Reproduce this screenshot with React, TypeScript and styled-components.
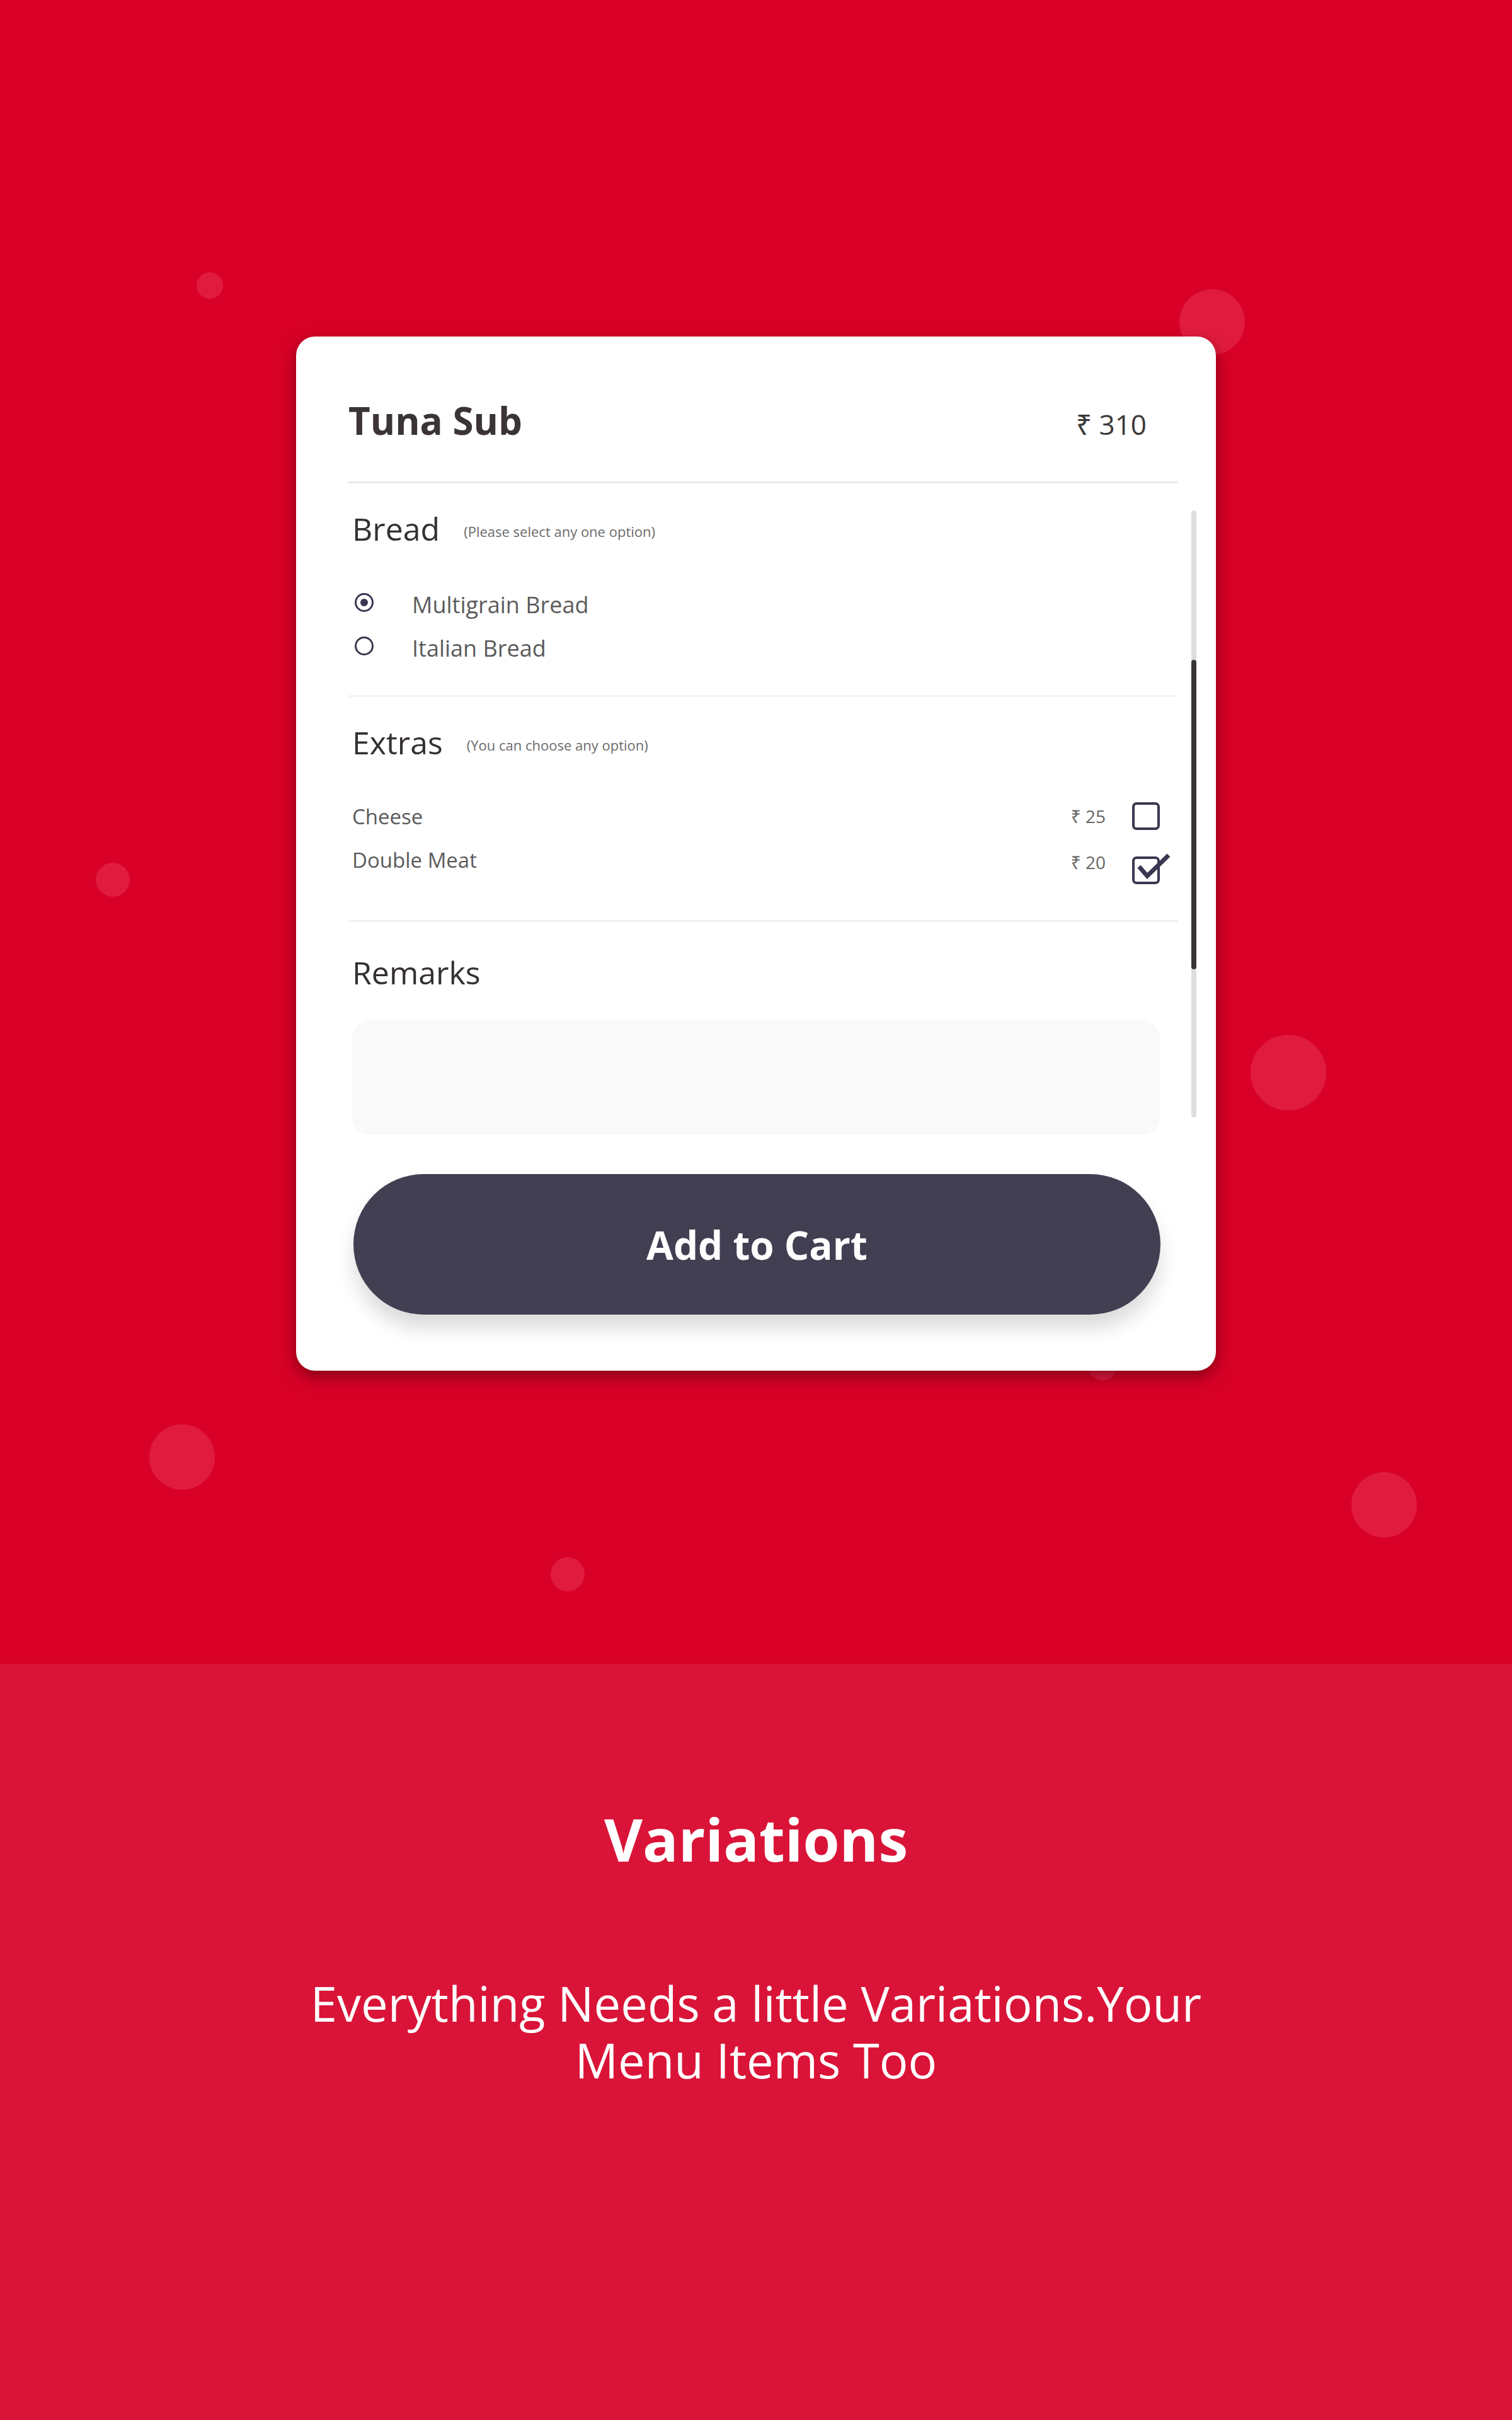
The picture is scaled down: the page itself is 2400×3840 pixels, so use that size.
import React from "react"
import styled, { createGlobalStyle } from "styled-components"

const GlobalStyle = createGlobalStyle`
    * {
        box-sizing: border-box;
    }

    body {
        margin: 0;
        font-family: "Open Sans", "Noto Sans", "DejaVu Sans", sans-serif;
    }
`

const bubbles = [
    { x: 333, y: 453, r: 21 },
    { x: 1924, y: 511, r: 52 },
    { x: 179, y: 1396, r: 27 },
    { x: 2045, y: 1702, r: 60 },
    { x: 1750, y: 2165, r: 25 },
    { x: 289, y: 2312, r: 52 },
    { x: 2197, y: 2388, r: 52 },
    { x: 901, y: 2498, r: 27 }
]

const breads = [
    { label: "Multigrain Bread", selected: true },
    { label: "Italian Bread", selected: false }
]

const extras = [
    { label: "Cheese", price: 25, checked: false },
    { label: "Double Meat", price: 20, checked: true }
]

const App = () => {
    return (
        <Page>
            <GlobalStyle />
            <Hero>
                {bubbles.map((b, i) => (
                    <Bubble key={i} $x={b.x} $y={b.y} $r={b.r} />
                ))}
                <Card>
                    <Header>
                        <Title>Tuna Sub</Title>
                        <Price>₹ 310</Price>
                    </Header>

                    <Body>
                        <Content>
                            <Section $pt={41} $pb={50}>
                                <SectionHead>
                                    <SectionTitle>Bread</SectionTitle>
                                    <Note>(Please select any one option)</Note>
                                </SectionHead>
                                <OptionList $mt={64}>
                                    {breads.map(b => (
                                        <RadioRow key={b.label}>
                                            <Radio>{b.selected && <Dot />}</Radio>
                                            {b.label}
                                        </RadioRow>
                                    ))}
                                </OptionList>
                            </Section>

                            <Section $pt={41} $pb={71}>
                                <SectionHead>
                                    <SectionTitle>Extras</SectionTitle>
                                    <Note>(You can choose any option)</Note>
                                </SectionHead>
                                <OptionList $mt={61}>
                                    {extras.map(e => (
                                        <ExtraRow key={e.label}>
                                            <ExtraName>{e.label}</ExtraName>
                                            <ExtraPrice $drop={e.checked ? 8 : 0}>
                                                ₹ {e.price}
                                            </ExtraPrice>
                                            <Checkbox $drop={e.checked ? 34 : 0}>
                                                {e.checked && (
                                                    <Tick viewBox="0 0 64 60">
                                                        <polyline points="11,26 24,41 58,8" />
                                                    </Tick>
                                                )}
                                            </Checkbox>
                                        </ExtraRow>
                                    ))}
                                </OptionList>
                            </Section>

                            <Section $pt={49} $pb={0} $last>
                                <SectionTitle>Remarks</SectionTitle>
                                <Remarks />
                            </Section>
                        </Content>
                        <Track>
                            <Thumb />
                        </Track>
                    </Body>

                    <Actions>
                        <CartButton>Add to Cart</CartButton>
                    </Actions>
                </Card>
            </Hero>

            <Info>
                <InfoTitle>Variations</InfoTitle>
                <InfoText>
                    Everything Needs a little Variations.Your
                    <br />
                    Menu Items Too
                </InfoText>
            </Info>
        </Page>
    )
}

const Page = styled.div`
    width: 2400px;
`

const Hero = styled.section`
    position: relative;
    height: 2640px;
    padding-top: 534px;
    display: flex;
    justify-content: center;
    align-items: flex-start;
    background: #d80027;
    overflow: hidden;
`

const Bubble = styled.span<{ $x: number; $y: number; $r: number }>`
    position: absolute;
    left: ${p => p.$x - p.$r}px;
    top: ${p => p.$y - p.$r}px;
    width: ${p => p.$r * 2}px;
    height: ${p => p.$r * 2}px;
    border-radius: 50%;
    background: #e11b3e;
`

const Card = styled.div`
    position: relative;
    z-index: 1;
    width: 1460px;
    padding: 0 31px 89px 83px;
    background: #fff;
    border-radius: 30px;
    box-shadow: 0 10px 24px rgba(70, 0, 12, 0.55);
`

const Header = styled.header`
    display: flex;
    justify-content: space-between;
    align-items: baseline;
    margin-right: 29px;
    padding: 92px 50px 56px 0;
    border-bottom: 3px solid #e8e8e8;
`

const Title = styled.h1`
    margin: 0;
    font-size: 60px;
    line-height: 82px;
    font-weight: 700;
    color: #3b3434;
`

const Price = styled.span`
    font-size: 44px;
    color: #3b3838;
`

const Body = styled.div`
    display: flex;
    align-items: flex-start;
`

const Content = styled.div`
    flex: 1;
    min-width: 0;
`

const Track = styled.div`
    position: relative;
    flex: none;
    width: 8px;
    height: 963px;
    margin: 43px 0 0 21px;
    background: #dedede;
    border-radius: 4px;
`

const Thumb = styled.div`
    position: absolute;
    left: 0;
    right: 0;
    top: 237px;
    height: 491px;
    background: #3a3535;
    border-radius: 4px;
`

const Section = styled.section<{ $pt: number; $pb: number; $last?: boolean }>`
    padding: ${p => p.$pt}px 29px ${p => p.$pb}px 6px;
    border-bottom: ${p => (p.$last ? "none" : "3px solid #f3f3f3")};
`

const SectionHead = styled.div`
    display: flex;
    align-items: baseline;
    gap: 38px;
`

const SectionTitle = styled.h2`
    margin: 0;
    font-size: 50px;
    line-height: 62px;
    font-weight: 400;
    color: #353030;
`

const Note = styled.span`
    position: relative;
    top: -6px;
    font-size: 22px;
    color: #6b6b6b;
`

const OptionList = styled.div<{ $mt: number }>`
    display: flex;
    flex-direction: column;
    gap: 19px;
    margin-top: ${p => p.$mt}px;
`

const RadioRow = styled.label`
    display: flex;
    align-items: center;
    gap: 61px;
    height: 50px;
    padding-left: 4px;
    font-size: 36px;
    color: #5b5b5b;
`

const Radio = styled.span`
    flex: none;
    display: flex;
    align-items: center;
    justify-content: center;
    width: 30px;
    height: 30px;
    margin-top: -6px;
    border: 3.5px solid #3a3850;
    border-radius: 50%;
`

const Dot = styled.span`
    width: 12px;
    height: 12px;
    border-radius: 50%;
    background: #3a3850;
`

const ExtraRow = styled.div`
    display: flex;
    align-items: center;
    height: 50px;
    font-size: 33px;
    color: #5b5b5b;
`

const ExtraName = styled.span`
    flex: 1;
`

const ExtraPrice = styled.span<{ $drop: number }>`
    margin: ${p => p.$drop}px 42px 0 0;
    font-size: 28px;
    color: #666;
`

const Checkbox = styled.span<{ $drop: number }>`
    position: relative;
    flex: none;
    width: 44px;
    height: 44px;
    margin-top: ${p => p.$drop}px;
    border: 4px solid #3a3850;
    border-radius: 7px;
`

const Tick = styled.svg`
    position: absolute;
    left: -4px;
    top: -14px;
    width: 64px;
    height: 60px;
    overflow: visible;

    polyline {
        fill: none;
        stroke: #3a3850;
        stroke-width: 7;
        stroke-linejoin: miter;
    }
`

const Remarks = styled.textarea`
    display: block;
    width: 100%;
    height: 183px;
    margin-top: 44px;
    border: none;
    border-radius: 30px;
    background: #f9f9f9;
    resize: none;
    outline: none;
`

const Actions = styled.div`
    margin-top: 62px;
    padding-left: 8px;
`

const CartButton = styled.button`
    display: block;
    width: 1281px;
    height: 223px;
    border: none;
    border-radius: 112px;
    background: #423f52;
    color: #fff;
    font-family: inherit;
    font-size: 62px;
    font-weight: 700;
    box-shadow: 0 22px 30px rgba(0, 0, 0, 0.14);
`

const Info = styled.section`
    height: 1200px;
    padding-top: 222px;
    background: #da1438;
    color: #fff;
    text-align: center;
`

const InfoTitle = styled.h2`
    margin: 0;
    font-size: 94px;
    line-height: 113px;
    font-weight: 700;
`

const InfoText = styled.p`
    margin: 159px 0 0;
    font-size: 76px;
    line-height: 90px;
    font-weight: 400;
`

export default App
